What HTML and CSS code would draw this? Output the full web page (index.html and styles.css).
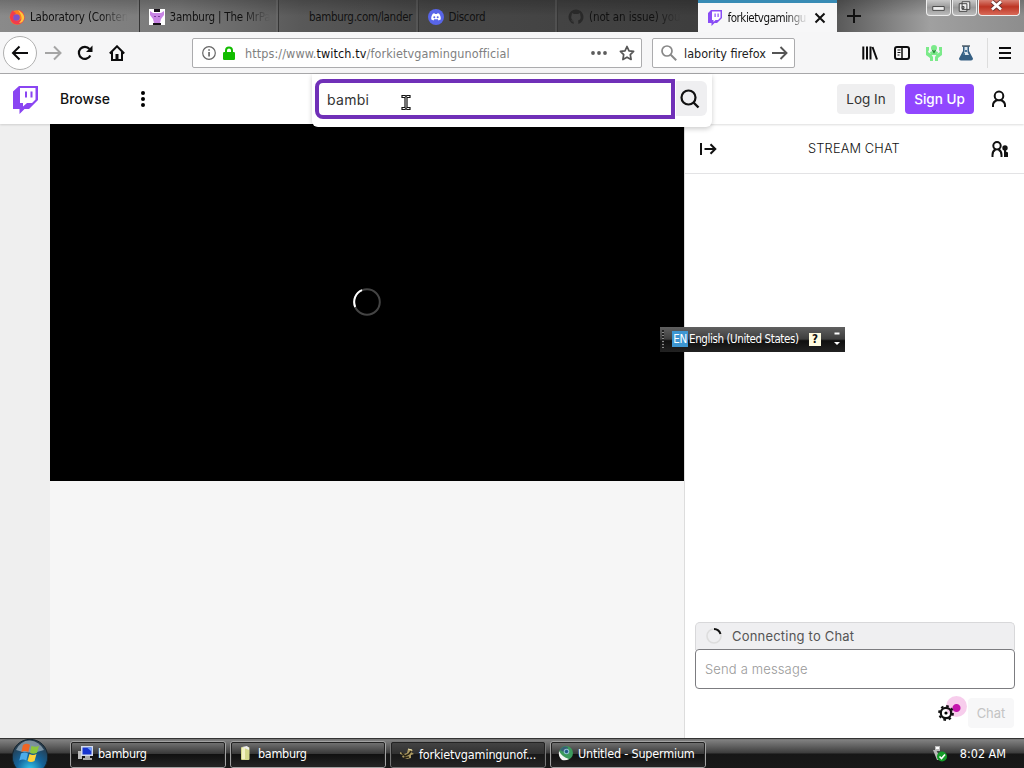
FILE: index.html
```html
<!DOCTYPE html>
<html lang="en">
<head>
<meta charset="utf-8">
<title>forkietvgamingunofficial - Twitch</title>
<link rel="stylesheet" href="styles.css">
</head>
<body>
<div class="desktop">
  <div class="tabs">
    <div class="tab t1">
      <svg class="fav" viewBox="0 0 16 16"><circle cx="8" cy="8.5" r="7.3" fill="#ff7b1e"/><path d="M1 8C1 4 3 2 4 1c0 2 2 2 3 3L4 8c1 4 5 5 8 2 2-3 0-6-2-9 4 1 6 5 5.500 9C14 15 8 17 4 14 2 12 1 10 1 8z" fill="#f23c4c"/><path d="M9 1c4 2 7 5 6 9-1 3-3 4-5 4 3-3 4-6-1-13z" fill="#ffc83b"/><circle cx="7.500" cy="8.500" r="3.300" fill="#8150c7"/></svg>
      <span class="label l1">Laboratory (Conten</span>
    </div>
    <div class="tab t2">
      <svg class="fav" viewBox="0 0 16 16"><path fill="#fff" d="M0 0h16v16H0z"/><path fill="#171018" d="M5 0h6v3H5zM4 14h8v2H4z"/><path fill="#c884e4" d="M1 2l3 2h8l3-2v4l-3 4-1 4H5l-1-4-3-4z"/><path fill="#7a3c9c" d="M5 7h2v1H5zM9 7h2v1H9z"/></svg>
      <span class="label l2">3amburg | The MrPa</span>
    </div>
    <div class="tab t3"><span class="fav"></span><span class="label l3">bamburg.com/lander</span></div>
    <div class="tab t4">
      <svg class="fav" viewBox="0 0 16 16"><circle cx="8" cy="8" r="8" fill="#5865e8"/><path fill="#fff" d="M5 4.500l1.500-.3.500.7h2l.5-.7 1.500.3c1.500 2 2 4 1.700 6l-2.200 1-.7-1.200H6.200l-.7 1.200-2.200-1c-.3-2 .2-4 1.700-6z"/><circle cx="6.300" cy="8.200" r="1" fill="#5865e8"/><circle cx="9.700" cy="8.200" r="1" fill="#5865e8"/></svg>
      <span class="label l4">Discord</span>
    </div>
    <div class="tab t5">
      <svg class="fav" viewBox="0 0 16 16"><path fill="#292929" d="M8 .5a7.500 7.500 0 0 0-2.400 14.600v-2.600C3.500 13 3 11.500 3 11.500l2.700-.2c-2-.4-3-2-2.200-4.500L4 4l2 1h4l2-1 .5 3c.7 2.400-.4 4-2.300 4.300l.2 3.800A7.500 7.500 0 0 0 8 .5z"/></svg>
      <span class="label l5">(not an issue) you</span>
    </div>
    <div class="tab active">
      <svg class="fav" viewBox="0 0 16 16"><path fill="#8a4df5" d="M4 0L1 3v10h3.500v3l3-3H10l5-5V0z"/><path fill="#fff" d="M5 1.500h8.500v6L11 10H8.500l-2 2v-2H5z"/><path fill="#8a4df5" d="M7.500 3.500h1.200V7H7.500zM10.500 3.500h1.200V7h-1.200z"/></svg>
      <span class="label l6">forkietvgamingu</span>
      <svg class="close" viewBox="0 0 12 12"><path d="M1.500 1.500l9 9M10.500 1.500l-9 9" stroke="#111" stroke-width="2"/></svg>
    </div>
    <svg class="newtab" viewBox="0 0 14 14"><path d="M7 0v14M0 7h14" stroke="#111" stroke-width="2"/></svg>
    <div class="winbtns">
      <span class="wb"><svg viewBox="0 0 24 15"><path d="M6 6.500h12v4H6z" fill="#eee" stroke="#444"/></svg></span>
      <span class="wb"><svg viewBox="0 0 24 15"><path d="M9.500 1.500h8v8h-8zM6.500 3.500h8v8h-8z" fill="#eee" stroke="#444"/><path d="M9.500 6.500h2v2h-2z" fill="#aaa" stroke="#444"/></svg></span>
      <span class="wb red"><svg viewBox="0 0 36 15"><path d="M13 1.500l9 8M22 1.500l-9 8" stroke="#6b3430" stroke-width="4.500"/><path d="M13 1.500l9 8M22 1.500l-9 8" stroke="#fff" stroke-width="2.700"/></svg></span>
    </div>
  </div>

  <div class="toolbar">
    <div class="back"><svg width="18" height="16" viewBox="0 0 18 16"><path d="M17 8H2M8.500 1.500L2 8l6.500 6.500" fill="none" stroke="#0c0c0d" stroke-width="2"/></svg></div>
    <svg class="fwd" width="17" height="16" viewBox="0 0 17 16"><path d="M0 8h15M9 1.500L15.500 8 9 14.500" fill="none" stroke="#a5a5a5" stroke-width="2"/></svg>
    <svg class="reload" width="16" height="16" viewBox="0 0 16 16"><path d="M13.300 10.500A6 6 0 1 1 12.500 4" fill="none" stroke="#0c0c0d" stroke-width="2.200"/><path d="M15.500.5V7H9z" fill="#0c0c0d"/></svg>
    <svg class="home" width="16" height="16" viewBox="0 0 16 16"><path d="M.8 8.500L8 1.300l7.200 7.200M3 7v8h10V7" fill="none" stroke="#0c0c0d" stroke-width="2"/><path d="M6.500 9h3v6h-3z" fill="#0c0c0d"/></svg>
    <div class="url">
      <svg width="14" height="14" viewBox="0 0 14 14"><circle cx="7" cy="7" r="6.300" fill="none" stroke="#666" stroke-width="1.200"/><path d="M6.300 6h1.500v4.500H6.300zM6.300 3.200h1.500v1.600H6.300z" fill="#555"/></svg>
      <svg class="lock" width="12" height="14" viewBox="0 0 12 14"><path d="M3 7V4.500a3 3 0 0 1 6 0V7" fill="none" stroke="#12bc00" stroke-width="2"/><rect y="6" width="12" height="8" rx="1.200" fill="#12bc00"/></svg>
      <span class="address">https://www.<b>twitch.tv</b>/forkietvgamingunofficial</span>
      <svg class="dots" width="16" height="4" viewBox="0 0 16 4"><g fill="#5c5c5c"><circle cx="2" cy="2" r="1.900"/><circle cx="8" cy="2" r="1.900"/><circle cx="14" cy="2" r="1.900"/></g></svg>
      <svg class="star" width="16" height="16" viewBox="0 0 16 16"><path d="M8 1.500l2 4.300 4.600.6-3.300 3.300.8 4.800L8 12.200l-4.100 2.300.8-4.800L1.400 6.400 6 5.800z" fill="none" stroke="#555" stroke-width="1.700" stroke-linejoin="round"/></svg>
    </div>
    <div class="find">
      <svg width="16" height="16" viewBox="0 0 16 16"><circle cx="6" cy="6" r="5" fill="none" stroke="#888" stroke-width="1.700"/><path d="M9.700 9.700l5.500 5.500" stroke="#888" stroke-width="2"/></svg>
      <span class="query">labority firefox</span>
      <svg class="go" width="16" height="14" viewBox="0 0 16 14"><path d="M0 7h14M8.500 1l6 6-6 6" fill="none" stroke="#555" stroke-width="1.900"/></svg>
    </div>
    <div class="tools">
      <svg width="16" height="16" viewBox="0 0 16 16"><path d="M1.300 1.500v13M5 1.500v13M8.500 1.500v13M10.500 2l4.500 12.500" stroke="#0c0c0d" stroke-width="2"/></svg>
      <svg width="16" height="14" viewBox="0 0 16 14"><rect x="1" y="1" width="14" height="12" rx="2" fill="none" stroke="#0c0c0d" stroke-width="2"/><path d="M8 1v12" stroke="#0c0c0d" stroke-width="1.500"/><path d="M3.500 4h3M3.500 6.500h3M3.500 9h2" stroke="#0c0c0d"/></svg>
      <svg class="ext" width="18" height="18" viewBox="0 0 18 18"><g fill="#7bea8a"><circle cx="9" cy="4" r="3"/><path d="M5 8q4-2 8 0l-1 3H6z"/><path d="M1 3h3v3l-1 2 3 2 2 3v4H5v-3L1 11zM17 3h-3v3l1 2-3 2-2 3v4h3v-3l4-3z"/></g><path d="M7.500 6l1.500 2.500L10.500 6" stroke="#27883a" stroke-width="1.300" fill="none"/></svg>
      <svg class="flask" width="16" height="16" viewBox="0 0 16 16"><path d="M5 1h6v5l4 7.500q0 2-2 2H3q-2 0-2-2L5 6z" fill="#345f83"/><path d="M6.500 2h3v5l1.500 3H5l1.500-3z" fill="#dce7ef"/><path d="M7 5h2v2H7zM5 8h2v2H5z" fill="#4a789b"/><path d="M4 1h8" stroke="#52606d" stroke-width="1.500"/></svg>
      <i class="sep"></i>
      <svg width="12" height="12" viewBox="0 0 12 12"><path d="M0 1h12M0 6h12M0 11h12" stroke="#0c0c0d" stroke-width="2"/></svg>
    </div>
  </div>

  <div class="topnav">
    <svg class="logo" width="25" height="28" viewBox="0 0 25 28"><path fill="#8a45f2" d="M6 0L0 5.500V23h6.500v5l5-5h4.500L25 14V0z"/><path fill="#fff" d="M7 2h15.500v11.500L19 17h-5l-4 3.500V17H7z"/><path fill="#8a45f2" d="M12 5.500h2v6h-2zM17.500 5.500h2v6h-2z"/></svg>
    <span class="browse">Browse</span>
    <svg class="kebab" width="6" height="16" viewBox="0 0 6 16"><circle cx="3" cy="2" r="2"/><circle cx="3" cy="8" r="2"/><circle cx="3" cy="14" r="2"/></svg>
    <div class="searchpop">
      <div class="searchinput"><span>bambi</span><svg class="ibeam" width="10" height="17" viewBox="0 0 10 17"><path d="M1 1.500h3l1 1 1-1h3v2H6v10h3v2H6l-1-1-1 1H1v-2h3v-10H1z" fill="#fff" stroke="#111" stroke-width="1.200"/></svg></div>
      <div class="searchbtn"><svg width="20" height="20" viewBox="0 0 20 20"><circle cx="8.500" cy="8.500" r="7" fill="none" stroke="#111" stroke-width="2.200"/><path d="M13.500 13.500l5 5" stroke="#111" stroke-width="2.400"/></svg></div>
    </div>
    <div class="account">
      <span class="login">Log In</span><span class="signup">Sign Up</span>
      <svg width="16" height="18" viewBox="0 0 16 18"><path d="M8 10.200a4.300 4.300 0 1 1 0-8.600 4.300 4.300 0 0 1 0 8.600zM2 17v-2q0-3 4-5M14 17v-2q0-3-4-5" fill="none" stroke="#111" stroke-width="2"/></svg>
    </div>
  </div>

  <div class="main">
    <div class="side"></div>
    <div class="center">
      <div class="video"><svg width="30" height="30" viewBox="0 0 30 30"><circle cx="15" cy="15" r="12.800" fill="none" stroke="#444" stroke-width="2"/><path d="M3.200 20A12.800 12.800 0 0 1 10 3.200" fill="none" stroke="#fff" stroke-width="2"/></svg></div>
    </div>
    <div class="chat">
      <div class="chathead">
        <svg width="17" height="14" viewBox="0 0 17 14"><path d="M1 1v12M4.500 7H15M10.500 2.200L15.300 7l-4.800 4.800" fill="none" stroke="#111" stroke-width="2"/></svg>
        <span>STREAM CHAT</span>
        <svg width="18" height="16" viewBox="0 0 18 16"><circle cx="6" cy="4.800" r="3.700" fill="none" stroke="#111" stroke-width="2"/><path d="M1.500 16v-2q0-4 3-5.500M10.500 16v-2q0-4-3-5.500" fill="none" stroke="#111" stroke-width="2"/><circle cx="14" cy="7" r="2.700" fill="#111"/><path d="M13 8.500h2v2l2 1V16h-4z" fill="#111"/></svg>
      </div>
      <div class="chatbody"></div>
      <div class="connecting"><svg width="16" height="16" viewBox="0 0 16 16"><circle cx="8" cy="8" r="7" fill="none" stroke="#ddd" stroke-width="1.600"/><path d="M8 1a7 7 0 0 1 6.500 5" fill="none" stroke="#111" stroke-width="2"/></svg><span>Connecting to Chat</span></div>
      <div class="message">Send a message</div>
      <div class="chatfoot">
        <div class="gear"><i class="halo"></i><svg width="16" height="16" viewBox="0 0 16 16"><circle cx="8" cy="8" r="5.200" fill="none" stroke="#111" stroke-width="2.200"/><circle cx="8" cy="8" r="6.900" fill="none" stroke="#111" stroke-width="2" stroke-dasharray="2.600 2.820"/><circle cx="8" cy="8" r="1.600"/></svg></div>
        <span class="send">Chat</span>
      </div>
    </div>
  </div>

  <div class="taskbar">
    <svg class="orb" width="38" height="30" viewBox="0 0 38 30"><defs><radialGradient id="orb" cx=".5" cy=".85" r=".75"><stop offset="0" stop-color="#35c8ee"/><stop offset=".5" stop-color="#14639a"/><stop offset="1" stop-color="#263b4c"/></radialGradient></defs><circle cx="19" cy="18" r="17.700" fill="url(#orb)" stroke="#15242e"/><path d="M5 11Q10 1 19 1.500T33 11Q19 16 5 11z" fill="#c5d4dc" opacity=".55"/><path d="M12 6q4-2.500 7 0l-1.700 7q-3.500-2-7 0z" fill="#f06524"/><path d="M20.500 6.700q4 2.200 7.500 0l-2 7q-3.500 2-7 0z" fill="#8cc63c"/><path d="M10 14.500q3.500-2 7 0l-1.700 7q-3.500-2-7 0z" fill="#4dacec"/><path d="M18.500 15q3.500 2.200 7 0l-2 7q-3.500 2-7 0z" fill="#ffd23b"/></svg>
    <div class="task k1"><svg width="16" height="16" viewBox="0 0 16 16"><path d="M0 6h4v8H0z" fill="#bbb"/><path d="M3 1h12v10H3z" fill="#d5dcec"/><path d="M4.500 2.500h9v7h-9z" fill="#1735cf"/><path d="M9 2.500h4.500v4z" fill="#6d9cf8"/><path d="M7 11h5v2h2v2H5v-2h2z" fill="#aaa"/></svg><span>bamburg</span></div>
    <div class="task k2"><svg width="16" height="16" viewBox="0 0 16 16"><rect x="3" y="2" width="8.500" height="13" rx="1" fill="#d5d98d"/><path d="M4 3h3v11H4z" fill="#f3f2c2"/><path d="M4 2l5-1 2 2v2z" fill="#eee"/></svg><span>bamburg</span></div>
    <div class="task k3"><svg width="16" height="16" viewBox="0 0 16 16"><path d="M1 6l4 2 3-1 1-4 5 1-2 2 3 2-3 1v3l-4 1-5-2 1-2-3-1z" fill="#ad9b62"/><path d="M3 7l3 3 4-2 2-3M5 12l5-1" fill="none" stroke="#292314" stroke-width="1.500"/><path d="M9 3l4 1" stroke="#eee3ad"/></svg><span>forkietvgamingunof...</span></div>
    <div class="task k4"><svg width="16" height="16" viewBox="0 0 16 16"><circle cx="8" cy="8" r="7" fill="#3b9a5c"/><path d="M2 5q3-5 8-3L8 8z" fill="#365f75"/><path d="M1 6q3 6 10 8-3 2-7 1Q0 12 1 6z" fill="#f3f5f3"/><circle cx="8.500" cy="6.500" r="2.800" fill="#8fbdd0"/><circle cx="8.500" cy="6.500" r="1.700" fill="#215a86"/></svg><span>Untitled - Supermium</span></div>
    <div class="tray"><svg width="16" height="16" viewBox="0 0 16 16"><path d="M3 0h5v5H3zM1 4h3l4 7v3H5z" fill="#bbb"/><path d="M4 1h3v2H4z" fill="#fff"/><circle cx="10" cy="10.500" r="5" fill="#159c29"/><path d="M7.500 10.500l2 2 3.500-4" fill="none" stroke="#fff" stroke-width="1.600"/></svg><span>8:02 AM</span></div>
  </div>

  <div class="langbar">
    <i class="grip"></i><span class="en">EN</span><span class="lang">English (United States)</span><span class="help">?</span>
    <svg width="8" height="14" viewBox="0 0 8 14"><path d="M1.500 1.500h5" stroke="#fff" stroke-width="2"/><path d="M1 10h6l-3 3z" fill="#fff"/></svg>
  </div>
</div>
</body>
</html>
```
FILE: styles.css
```css
* { box-sizing: border-box; }
body { margin: 0; overflow: hidden; font-family: "DejaVu Sans Condensed", "DejaVu Sans", sans-serif; }
svg { display: block; flex: none; }
.desktop { position: relative; width: 1024px; height: 768px; display: flex; flex-direction: column; background: #fff; white-space: nowrap; }

.tabs { height: 32px; flex: none; display: flex; background: linear-gradient(#0003, #0000 50%), linear-gradient(90deg, #8a8a8a 0, #7a7a7a 180px, #595959 300px, #484848 430px, #3e3e3e 690px, #5a5a5a 838px, #a0a0a0 930px, #8d8d8d 100%); }
.tab { width: 139.5px; flex: none; display: flex; align-items: center; padding: 2px 6px 0 9px; gap: 5px; border-right: 1px solid #353535; box-shadow: inset -2px 0 #88888833; }
.fav { width: 16px; height: 16px; flex: none; }
.label { font-size: 11.5px; color: #111; letter-spacing: -.3px; }
.l1, .l2, .l5, .l6 { -webkit-mask-image: linear-gradient(90deg, #000 72%, transparent 100%); mask-image: linear-gradient(90deg, #000 72%, transparent 100%); }
.l1 { letter-spacing: -.15px; }
.l2 { letter-spacing: -.2px; }
.t5 { border: 0; box-shadow: none; padding-left: 10px; }
.l5 { letter-spacing: -.1px; }
.active { background: #f7f7f8; border: 0; border-top: 3px solid #388bb5; box-shadow: none; padding: 0 11px 0 9px; width: 139.5px; }
.active .label { width: 80px; letter-spacing: -.45px; }
.active .close { width: 12px; height: 12px; margin-left: 1px; }
.newtab { width: 14px; height: 14px; margin: 9px 0 0 10px; }
.winbtns { display: flex; margin-left: 65px; gap: 1px; height: 16px; }
.wb { width: 25px; height: 16px; background: linear-gradient(#c8c8c8, #999 50%, #bbb); border: 1px solid #eee; border-top: 0; border-radius: 0 0 4px 4px; }
.wb svg { width: 23px; height: 15px; }
.wb.red { width: 42px; background: linear-gradient(#d88073, #bd3524 45%, #d86a58); }
.wb.red svg { width: 36px; }

.toolbar { height: 42px; flex: none; display: flex; align-items: center; background: #f6f6f7; border-bottom: 1px solid #a9a9ab; }
.back { width: 34px; height: 34px; margin-left: 3px; border: 1px solid #b0b0b0; border-radius: 50%; background: #fff; display: flex; align-items: center; justify-content: center; }
.fwd { margin-left: 8px; }
.reload { margin-left: 15px; }
.home { margin-left: 16px; }
.url { width: 450px; height: 30px; margin-left: 67px; border: 1px solid #acacae; border-radius: 2px; background: #fff; display: flex; align-items: center; padding: 0 6px 0 9px; }
.lock { margin-left: 7px; }
.address { font-size: 12.5px; color: #808080; margin: 1px 0 0 10px; flex: 1; letter-spacing: .1px; }
.address b { font-weight: 400; color: #111; }
.star { margin-left: 12px; }
.find { width: 143px; height: 30px; margin-left: 10px; border: 1px solid #acacae; border-radius: 2px; background: #fff; display: flex; align-items: center; padding: 0 5px 0 8px; }
.query { font-size: 12.5px; margin: 1px 0 0 7px; width: 85px; color: #222; }
.go { margin-left: 3px; }
.tools { display: flex; align-items: center; margin-left: 67px; gap: 16px; }
.ext { margin-left: -1px; }
.flask { margin-left: -1px; }
.sep { width: 1px; height: 30px; background: #ddd; margin-left: -3px; margin-right: -9px; }
.sep + svg { margin-left: 4px; }

.topnav { height: 50px; flex: none; display: flex; align-items: center; background: #fff; font-family: Inter, sans-serif; position: relative; z-index: 1; box-shadow: 0 1px 2px #0002; }
.logo { margin: 2px 0 0 13px; }
.browse { margin: -2px 0 0 22px; font-size: 14px; font-weight: 500; color: #111; width: 80px; }
.kebab { flex: none; }
.searchpop { align-self: flex-start; flex: none; width: 400px; height: 53px; margin-left: 166px; padding: 5px 4px; display: flex; background: #fff; border-radius: 0 0 6px 6px; box-shadow: 0 2px 5px #0003; }
.searchinput { width: 360px; height: 40px; margin-left: -1px; border: 4px solid #7030b8; border-radius: 8px 0 0 8px; padding-left: 8px; display: flex; align-items: center; font-size: 14px; color: #333; letter-spacing: .3px; }
.ibeam { margin: 7px 0 0 32px; }
.searchbtn { width: 31px; height: 35px; margin: 2px 0 0 1px; background: #efeff1; border-radius: 0 6px 6px 0; display: flex; align-items: center; padding-left: 4px; }
.account { display: flex; align-items: center; margin-left: 125px; font-size: 13.5px; }
.login, .signup { height: 30px; line-height: 30px; text-align: center; border-radius: 4px; }
.login { width: 58px; background: #efeff0; color: #333; }
.signup { width: 69px; margin: 0 17px 0 10px; background: #9147ff; color: #fff; font-weight: 500; }

.main { height: 614px; flex: none; display: flex; }
.side { width: 50px; background: #efefef; }
.center { width: 634px; background: #f6f6f6; }
.video { height: 357px; padding-bottom: 2px; background: #000; display: flex; align-items: center; justify-content: center; }
.chat { width: 340px; border-left: 1px solid #ddd; background: #fff; display: flex; flex-direction: column; padding: 0 9px 0 10px; font-family: Inter, sans-serif; }
.chathead { height: 50px; margin: 0 -9px 0 -10px; border-bottom: 1px solid #e3e3e5; display: flex; align-items: center; justify-content: space-between; padding: 0 15px; font-size: 12.8px; font-weight: 300; letter-spacing: .15px; color: #111; }
.chatbody { flex: 1; }
.connecting { height: 28px; border: 1px solid #d8d8da; border-bottom: 0; border-radius: 5px 5px 0 0; background: #efeff1; display: flex; align-items: center; padding: 0 0 2px 10px; gap: 10px; font-size: 13px; color: #555; letter-spacing: .2px; }
.message { height: 40px; margin-top: -1px; border: 1px solid #7c7c80; border-radius: 4px; background: #fff; line-height: 39px; padding-left: 9px; font-size: 13px; font-weight: 300; color: #999; letter-spacing: .15px; }
.chatfoot { height: 49px; display: flex; justify-content: flex-end; align-items: center; gap: 14px; padding: 0 1px 2px 0; }
.gear { position: relative; }
.halo { position: absolute; left: 8px; top: -9px; width: 21px; height: 21px; border-radius: 50%; background: radial-gradient(circle at 10.5px 12px, #c415ad 0 3.5px, #f7cdec 4.5px); }
.gear svg { position: relative; }
.send { width: 46px; height: 30px; line-height: 30px; text-align: center; border-radius: 4px; background: #f7f7f8; color: #c4c4c4; font-size: 13px; }

.taskbar { height: 30px; flex: none; display: flex; align-items: center; border-top: 1px solid #333; background: linear-gradient(#858585 0, #606060 25%, #3b3b3b 49%, #161616 51%, #191919 100%); color: #fff; font-size: 12.5px; box-shadow: inset 0 1px #777; }
.orb { margin: 0 21px 0 11px; }
.task { width: 156px; height: 27px; margin: 1px 4px 0 0; flex: none; display: flex; align-items: center; gap: 4px; padding: 0 0 2px 7px; border: 1px solid #a2a2a2; border-radius: 3px; outline: 1px solid #222; outline-offset: -2px; background: linear-gradient(#757575, #383838 47%, #101010 50%, #252525); }
.k1 span, .k2 span { letter-spacing: -.3px; }
.k3 { background: linear-gradient(#454545, #303030 48%, #181818 50%, #242424); border-color: #777; padding-bottom: 0; }
.k3 span { letter-spacing: -.15px; }
.k3 svg { margin-left: 1px; }
.k4 span { letter-spacing: -.2px; }
.tray { margin-left: auto; margin-right: 18px; display: flex; align-items: center; gap: 12px; }

.langbar { position: absolute; z-index: 2; left: 660px; top: 327px; width: 185px; height: 25px; padding-bottom: 1px; background: linear-gradient(#606060, #3e3e3e 48%, #101010 55%, #222); color: #fff; display: flex; align-items: center; font-size: 11.5px; }
.grip { width: 2px; height: 18px; margin: 0 8px 0 2px; background: repeating-linear-gradient(#222 0 2px, #888 2px 3px); }
.en { width: 16px; height: 16px; line-height: 16px; background: #3d96d2; text-align: center; letter-spacing: -.5px; }
.lang { width: 120px; margin-left: 1px; letter-spacing: -.4px; }
.help { width: 12px; height: 13px; margin-right: 12px; flex: none; line-height: 13px; background: #fffbe0; color: #111; font-weight: 700; text-align: center; }
```
